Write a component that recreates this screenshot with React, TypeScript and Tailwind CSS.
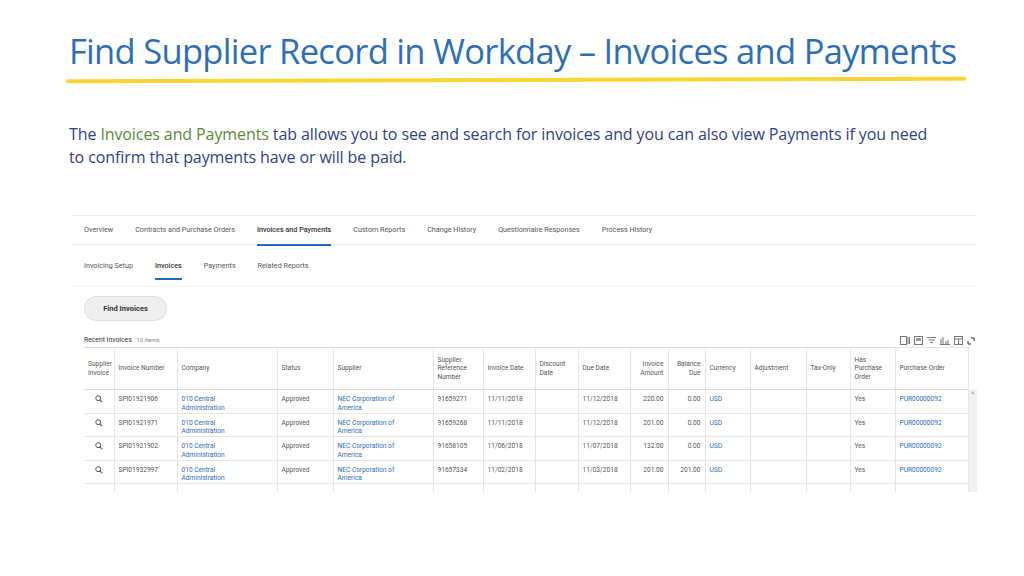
import React from "react";

const cols = [30, 63, 100, 56, 100, 50, 52, 43, 52, 38, 37, 45, 56, 44, 45, 73];
const heads: [string, string][] = [
  ["Supplier Invoice", "l"], ["Invoice Number", "l"], ["Company", "l"], ["Status", "l"], ["Supplier", "l"],
  ["Supplier Reference Number", "l"], ["Invoice Date", "l"], ["Discount Date", "l"], ["Due Date", "l"],
  ["Invoice Amount", "r"], ["Balance Due", "r"], ["Currency", "l"], ["Adjustment", "l"], ["Tax-Only", "l"],
  ["Has Purchase Order", "l"], ["Purchase Order", "l"],
];
const rows = [
  ["SPI01921906", "91659271", "11/11/2018", "11/12/2018", "220.00", "0.00"],
  ["SPI01921971", "91659268", "11/11/2018", "11/12/2018", "201.00", "0.00"],
  ["SPI01921902", "91658105", "11/06/2018", "11/07/2018", "132.00", "0.00"],
  ["SPI01932997", "91657334", "11/02/2018", "11/03/2018", "201.00", "201.00"],
];

function Mag() {
  return (
    <svg width="8" height="8" viewBox="0 0 10 10" className="mx-auto">
      <circle cx="4" cy="4" r="3" fill="none" stroke="#666" strokeWidth="1.3" />
      <path d="M6.3 6.3 L9 9" stroke="#666" strokeWidth="1.5" />
    </svg>
  );
}

function Tools() {
  const s = { stroke: "#777", fill: "none", strokeWidth: 1 };
  return (
    <div className="flex gap-[4px] items-center">
      <svg width="10" height="9" viewBox="0 0 10 9"><rect x="0.5" y="0.5" width="6" height="8" {...s} /><path d="M8 1v7M9.5 1v7" {...s} /></svg>
      <svg width="9" height="9" viewBox="0 0 9 9"><rect x="0.5" y="0.5" width="8" height="8" {...s} /><rect x="2" y="2" width="5" height="3" fill="#999" /></svg>
      <svg width="9" height="9" viewBox="0 0 9 9"><path d="M0 1.5h9M1.5 4h6M3 6.5h3" {...s} /></svg>
      <svg width="10" height="9" viewBox="0 0 10 9"><path d="M1 3v6M3 1v8M6 5v4M8 4v5M0 8.5h10" {...s} /></svg>
      <svg width="9" height="9" viewBox="0 0 9 9"><rect x="0.5" y="0.5" width="8" height="8" {...s} /><path d="M0.5 3h8M4.5 3v6" {...s} /></svg>
      <svg width="8" height="8" viewBox="0 0 8 8"><path d="M1 4v3h3M4 1h3v3" stroke="#333" fill="none" /></svg>
    </div>
  );
}

export default function App() {
  const td = "border-r border-[#e6e6e6] px-[4px] align-top pt-[5px]";
  return (
    <div className="w-[1024px] h-[576px] bg-white relative overflow-hidden" style={{ fontFamily: "Roboto, 'Liberation Sans', sans-serif" }}>
      <div className="pl-[69px] pt-[28px]" style={{ fontFamily: "'Open Sans', 'Noto Sans', sans-serif" }}>
        <h1 className="text-[34.5px] leading-[46px] text-[#2e6fb3] tracking-[-0.7px] whitespace-nowrap">Find Supplier Record in Workday – Invoices and Payments</h1>
      </div>
      <div className="ml-[66px] mt-[4px] h-[4px] w-[900px] bg-[#f7d635] rounded-full -rotate-[0.15deg]" />
      <p className="ml-[69px] mt-[41px] w-[872px] text-[16px] leading-[23px] text-[#2e3f8c] tracking-[-0.1px]" style={{ fontFamily: "'Open Sans', 'Noto Sans', sans-serif" }}>
        The <span className="text-[#5b8a37]">Invoices and Payments</span> tab allows you to see and search for invoices and you can also view Payments if you need to confirm that payments have or will be paid.
      </p>

      <div className="absolute left-[72px] top-[215px] w-[905px] h-[277px] overflow-hidden text-[#555]">
        <div className="h-[30px] border-y border-[#eee] flex items-stretch pl-[12px] gap-[22px] text-[7.2px]">
          {["Overview", "Contracts and Purchase Orders", "Invoices and Payments", "Custom Reports", "Change History", "Questionnaire Responses", "Process History"].map((t) => (
            <div key={t} className={`relative flex items-center ${t === "Invoices and Payments" ? "text-[#333] font-medium" : ""}`}>
              {t}
              {t === "Invoices and Payments" && <div className="absolute bottom-[-2px] left-0 right-0 h-[2px] bg-[#1d6ec3]" />}
            </div>
          ))}
        </div>
        <div className="h-[35px] mt-[6px] flex items-stretch pl-[12px] gap-[22px] text-[7.2px] border-b border-[#f3f3f3]">
          {["Invoicing Setup", "Invoices", "Payments", "Related Reports"].map((t) => (
            <div key={t} className={`relative flex items-start pt-[10px] ${t === "Invoices" ? "text-[#333] font-medium" : ""}`}>
              {t}
              {t === "Invoices" && <div className="absolute top-[27px] left-0 right-0 h-[2px] bg-[#1d6ec3]" />}
            </div>
          ))}
        </div>
        <div className="ml-[12px] mt-[10px] w-[83px] h-[25px] rounded-full bg-[#efefef] border border-[#ddd] flex items-center justify-center text-[7.5px] font-bold text-[#333]">Find Invoices</div>
        <div className="flex items-end justify-between ml-[12px] mr-[2px] mt-[11px] h-[13px]">
          <div className="text-[6.8px] text-[#333]">Recent Invoices <span className="text-[#888] ml-[3px] text-[6px]">10 items</span></div>
          <Tools />
        </div>
        <div className="ml-[12px] mt-[2px] flex">
          <table className="table-fixed border-collapse text-[6.6px] leading-[8.5px]" style={{ width: 884 }}>
            <colgroup>{cols.map((w, i) => <col key={i} style={{ width: w }} />)}</colgroup>
            <thead>
              <tr className="h-[42px] border-y border-[#ddd] bg-white">
                {heads.map(([h, a]) => (
                  <th key={h} className={`border-r border-[#e6e6e6] px-[4px] font-normal text-[#555] ${a === "r" ? "text-right" : "text-left"}`}>{h}</th>
                ))}
              </tr>
            </thead>
            <tbody>
              {rows.map((r) => (
                <tr key={r[0]} className="h-[23.5px] border-b border-[#e6e6e6]">
                  <td className={td}><Mag /></td>
                  <td className={td}>{r[0]}</td>
                  <td className={`${td} text-[#2a6db8]`}>010 Central<br />Administration</td>
                  <td className={td}>Approved</td>
                  <td className={`${td} text-[#2a6db8]`}>NEC Corporation of<br />America</td>
                  <td className={td}>{r[1]}</td>
                  <td className={td}>{r[2]}</td>
                  <td className={td}></td>
                  <td className={td}>{r[3]}</td>
                  <td className={`${td} text-right`}>{r[4]}</td>
                  <td className={`${td} text-right`}>{r[5]}</td>
                  <td className={`${td} text-[#2a6db8]`}>USD</td>
                  <td className={td}></td>
                  <td className={td}></td>
                  <td className={td}>Yes</td>
                  <td className={`${td} text-[#2a6db8]`}>PUR00000092</td>
                </tr>
              ))}
              <tr className="h-[10px]">{cols.map((_, i) => <td key={i} className="border-r border-[#e6e6e6]" />)}</tr>
            </tbody>
          </table>
          <div className="w-[9px] mt-[42px] bg-[#f1f1f1] text-[5px] text-[#aaa] text-center">▲</div>
        </div>
      </div>
    </div>
  );
}
